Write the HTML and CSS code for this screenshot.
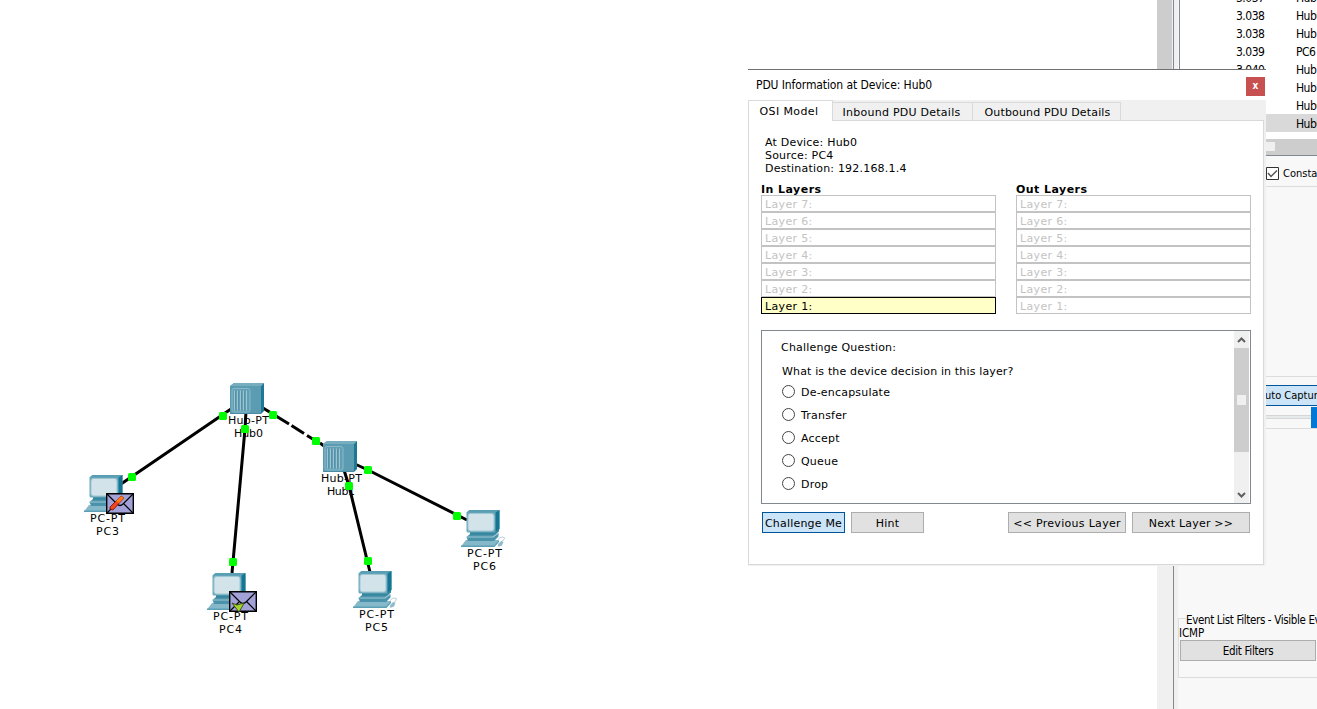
FILE: index.html
```
<!DOCTYPE html>
<html lang="en">
<head>
<meta charset="utf-8">
<title>PDU Information</title>
<link rel="stylesheet" href="styles.css">
</head>
<body>
<div class="app">
  <main class="workspace">
    <svg class="topology" width="1157" height="709" viewBox="0 0 1157 709">
      <defs>
        <symbol id="pc" viewBox="0 0 46 38" overflow="visible">
          <path d="M37 29.500q2-2.500 4.500-2.500 3.500.500 1.500 2.500t-4 3" fill="none" stroke="#b4ced8" stroke-width="1"/>
          <path d="M36.500 36.500l1-3 3-2.500 2 1-1.500 3.500-2.500 1z" fill="#8fbccb"/>
          <path d="M0 36.500L5 30h33l-5 6.500z" fill="#85b8c9"/>
          <path d="M0 35.500h33l5-5.500v2l-4.500 5H0z" fill="#5c9fb5"/>
          <path d="M5.500 27l4-3.500h28v3L33 31H7z" fill="#4a93ab"/>
          <path d="M5.500 27H32l5.500-4" fill="none" stroke="#a0c8d5" stroke-width="1.200"/>
          <path d="M9 21.500h26l3-2v2l-4 3H9z" fill="#33849d"/>
          <path d="M5.500 2.500L8.500 0H38.500v19l-4 3.500H6.500l-1-1z" fill="#6aa8bc"/>
          <path d="M5.500 2.500L8.500 0H38.500L34.500 2.500z" fill="#5a9eb4"/>
          <path d="M34.500 2.500l4-2.500v19l-4 3.500z" fill="#157693"/>
          <rect x="7" y="3.500" width="26" height="17.500" rx="2.500" fill="#d3e3ea" stroke="#9dc5d2"/>
        </symbol>
        <symbol id="hub" viewBox="0 0 34 31">
          <path d="M0 3l4-3h30l-3 3v28H0z" fill="#5b9cb2"/>
          <path d="M0 3l4-3h30l-3 3z" fill="#76adbf"/>
          <path d="M31 3l3-3v28l-3 3z" fill="#1d7894"/>
          <path d="M0 30.500h31" stroke="#478ca4"/>
          <rect x="2" y="5.500" width="18" height="23.500" rx="2" fill="#629fb5" stroke="#8ab9c8"/>
          <path d="M4.500 7.500v20M7.500 7.500v20M10.500 7.500v20M13.500 7.500v20M16.500 7.500v20" stroke="#9cc4d1"/>
          <path d="M5.500 8v19M8.500 8v19M11.500 8v19M14.500 8v19" stroke="#4d8ca4" stroke-width=".7"/>
        </symbol>
        <symbol id="mail" viewBox="0 0 28 21">
          <path d="M.7.700h26.600v19.600H.7z" fill="#a2a2d8" stroke="#000" stroke-width="1.400"/>
          <path d="M1 1l10 10q3 3 6 0L27 1M1 20l9-9M27 20l-9-9" fill="none" stroke="#000" stroke-width="1.200"/>
        </symbol>
      </defs>

      <g class="labels">
        <text x="248.500" y="424" textLength="41">Hub-PT</text><text x="248.500" y="437" textLength="29">Hub0</text>
        <text x="341.500" y="482" textLength="41">Hub-PT</text><text x="341" y="495" textLength="28">Hub1</text>
        <text x="107.500" y="522" textLength="35">PC-PT</text><text x="107.500" y="535" textLength="23">PC3</text>
        <text x="230.500" y="620" textLength="35">PC-PT</text><text x="230.500" y="633" textLength="23">PC4</text>
        <text x="376.500" y="618" textLength="35">PC-PT</text><text x="376.500" y="631" textLength="23">PC5</text>
        <text x="484.500" y="557" textLength="35">PC-PT</text><text x="484.500" y="570" textLength="23">PC6</text>
      </g>
      <g class="cables">
        <path d="M231 409L121 484M246 411L245 429L232 573M344 470L349 486L370 572M356 464.500L368 470L467 520"/>
        <path d="M263 408L289 424M291.500 425.500L304 433.500M307 435.500L316 441M320 443L324 446"/>
      </g>
      <use href="#hub" x="230" y="383" width="34" height="31"/>
      <use href="#hub" x="323" y="441" width="34" height="31"/>
      <use href="#pc" x="84" y="475" width="46" height="38"/>
      <use href="#pc" x="207" y="573" width="46" height="38"/>
      <use href="#pc" x="353" y="571" width="46" height="38"/>
      <use href="#pc" x="461" y="510" width="46" height="38"/>
      <g class="links">
        <rect x="219" y="412" width="8" height="8" rx="1.500"/><rect x="128" y="473" width="8" height="8" rx="1.500"/>
        <rect x="241" y="425" width="8" height="8" rx="1.500"/><rect x="229" y="558" width="8" height="8" rx="1.500"/>
        <rect x="269" y="411" width="8" height="8" rx="1.500"/><rect x="312" y="437" width="8" height="8" rx="1.500"/>
        <rect x="345" y="482" width="8" height="8" rx="1.500"/><rect x="364" y="557" width="8" height="8" rx="1.500"/>
        <rect x="364" y="466" width="8" height="8" rx="1.500"/><rect x="453" y="512" width="8" height="8" rx="1.500"/>
      </g>
      <use href="#mail" x="106" y="493" width="28" height="21"/>
      <path d="M110 507l11-11 3 2-11 12-3-1z" fill="#f0441c" stroke="#701008" stroke-width=".8"/>
      <path d="M116 501l5-5 3 2-5 5z" fill="#ff7a1a"/>
      <use href="#mail" x="229" y="591" width="28" height="21"/>
      <path d="M232 603l5 2 7-2-2 4-3 5-4-5z" fill="#a4d52a" stroke="#34440c" stroke-width=".9"/>
    </svg>
  </main>
  <div class="vscroll"><div class="vscroll-thumb"></div></div>
  <div class="splitter"></div>
  <aside class="panel">
    <div class="event-list">
      <div class="event"><span>3.037</span><span>Hub1</span></div>
      <div class="event"><span>3.038</span><span>Hub0</span></div>
      <div class="event"><span>3.038</span><span>Hub1</span></div>
      <div class="event"><span>3.039</span><span>PC6</span></div>
      <div class="event"><span>3.040</span><span>Hub1</span></div>
      <div class="event"><span></span><span>Hub1</span></div>
      <div class="event"><span></span><span>Hub0</span></div>
      <div class="event selected"><span></span><span>Hub0</span></div>
    </div>
    <div class="hscroll"><i class="hgrip"></i></div>
    <div class="constant">
      <svg width="13" height="13" viewBox="0 0 13 13"><path d="M.5.500h12v12H.5z" fill="#fff" stroke="#333"/><path d="M2 6l3 3.500L11 3.500" fill="none" stroke="#555" stroke-width="1.500"/></svg>
      <span>Constant Delay</span>
    </div>
    <div class="play">
      <div class="capture">uto Capture / Play</div>
      <div class="slider"><div class="groove"></div><div class="handle"></div></div>
    </div>
    <section class="filters">
      <div class="legend">Event List Filters - Visible Events</div>
      <div class="protocol">ICMP</div>
      <div class="edit">Edit Filters</div>
    </section>
  </aside>
</div>

<div class="dialog">
  <header class="titlebar"><span class="title">PDU Information at Device: Hub0</span><span class="close">x</span></header>
  <nav class="tabs">
    <div class="tab active">OSI Model</div><div class="tab inbound">Inbound PDU Details</div><div class="tab outbound">Outbound PDU Details</div><div class="tab-fill"></div>
  </nav>
  <div class="body">
    <div class="info"><div>At Device: Hub0</div><div>Source: PC4</div><div>Destination: 192.168.1.4</div></div>
    <div class="layers">
      <div class="stack">
        <h2>In Layers</h2>
        <div class="layer">Layer 7:</div><div class="layer">Layer 6:</div><div class="layer">Layer 5:</div><div class="layer">Layer 4:</div><div class="layer">Layer 3:</div><div class="layer">Layer 2:</div><div class="layer current">Layer 1:</div>
      </div>
      <div class="stack">
        <h2>Out Layers</h2>
        <div class="layer">Layer 7:</div><div class="layer">Layer 6:</div><div class="layer">Layer 5:</div><div class="layer">Layer 4:</div><div class="layer">Layer 3:</div><div class="layer">Layer 2:</div><div class="layer">Layer 1:</div>
      </div>
    </div>
    <div class="challenge">
      <div class="quiz">
        <div class="heading">Challenge Question:</div>
        <div class="question">What is the device decision in this layer?</div>
        <div class="option"><i></i>De-encapsulate</div>
        <div class="option"><i></i>Transfer</div>
        <div class="option"><i></i>Accept</div>
        <div class="option"><i></i>Queue</div>
        <div class="option"><i></i>Drop</div>
      </div>
      <div class="scroll">
        <svg width="15" height="17" viewBox="0 0 15 17"><path d="M4 11l3.500-3.500L11 11" fill="none" stroke="#606060" stroke-width="2"/></svg>
        <div class="thumb"><i></i></div>
        <svg class="down" width="15" height="17" viewBox="0 0 15 17"><path d="M4 7l3.500 3.500L11 7" fill="none" stroke="#606060" stroke-width="2"/></svg>
      </div>
    </div>
    <div class="actions">
      <div class="btn primary">Challenge Me</div><div class="btn hint">Hint</div><div class="btn prev">&lt;&lt; Previous Layer</div><div class="btn next">Next Layer &gt;&gt;</div>
    </div>
  </div>
</div>
</body>
</html>
```
FILE: styles.css
```
* { box-sizing: border-box; }
body { margin: 0; width: 1317px; height: 709px; overflow: hidden; position: relative; background: #fff; color: #000; font: 11px/13px "DejaVu Sans", sans-serif; white-space: nowrap; }
svg { display: block; flex: none; }

.app { display: flex; width: 1317px; height: 709px; font-family: "DejaVu Sans Condensed", "DejaVu Sans", sans-serif; font-stretch: condensed; }
.workspace { width: 1157px; flex: none; }
.labels text { font: 11px "DejaVu Sans", sans-serif; text-anchor: middle; }
.cables path { fill: none; stroke: #000; stroke-width: 3; }
.links rect { fill: #0f0; }

.vscroll { width: 16px; flex: none; background: #f0f0f0; }
.vscroll-thumb { width: 15px; height: 300px; background: #cdcdcd; }
.splitter { width: 5px; flex: none; background: #f0f0f0; border-left: 1px solid #828790; }
.panel { width: 139px; flex: none; background: #f8f8f8; overflow: hidden; display: flex; flex-direction: column; }
.event-list { height: 139px; flex: none; display: flex; flex-direction: column; justify-content: flex-end; padding-bottom: 7px; margin-left: 1px; border-left: 1px solid #828790; background: #fff; overflow: hidden; }
.event { display: flex; height: 18px; flex: none; line-height: 20px; padding-left: 56px; font-size: 12px; letter-spacing: -0.5px; }
.event span { flex: none; }
.event span:first-child { width: 60px; }
.event.selected { background: #d9d9d9; }
.hscroll { height: 17px; flex: none; padding: 3px 0 0 80px; background: #cdcdcd; border-bottom: 1px solid #828790; background-clip: padding-box; }
.hgrip { display: block; width: 17px; height: 9px; background: #f0f0f0; }
.constant { display: flex; height: 31px; flex: none; padding: 11px 0 0 88px; gap: 4px; line-height: 14px; border-bottom: 1px solid #dcdcdc; }
.play { margin-top: 189px; height: 53px; flex: none; border: solid #dcdcdc; border-width: 1px 0; padding: 8px 0 0 80px; }
.capture { height: 21px; padding-left: 7px; line-height: 20px; background: #cce4f7; border: solid #005499; border-width: 1px 0; }
.slider { display: flex; padding-top: 1px; }
.groove { width: 53px; height: 4px; flex: none; margin-top: 8px; background: #e7eaea; border: solid #d6d6d6; border-width: 1px 0; }
.handle { width: 8px; height: 21px; flex: none; background: #0078d7; }
.filters { margin-top: 189px; height: 60px; flex: none; border: solid #dcdcdc; border-width: 1px 0 1px 1px; }
.legend { width: 160px; height: 12px; margin: -5px 0 0 7px; line-height: 12px; background: #f8f8f8; font-size: 11.5px; letter-spacing: -0.35px; }
.protocol { line-height: 14px; font-size: 11.5px; letter-spacing: -0.1px; }
.edit { width: 136px; height: 21px; margin: 0 0 0 1px; border: 1px solid #adadad; background: #e1e1e1; line-height: 20px; text-align: center; font-size: 11.5px; letter-spacing: -0.3px; }

.dialog { position: absolute; left: 748px; top: 69px; width: 518px; height: 497px; background: #f0f0f0; border-top: 1px solid #707070; display: flex; flex-direction: column; letter-spacing: 0.2px; }
.titlebar { display: flex; justify-content: space-between; height: 30px; flex: none; padding: 7px 1px 0 8px; background: #fff; line-height: 17px; font-family: "DejaVu Sans Condensed", "DejaVu Sans", sans-serif; font-stretch: condensed; }
.title { font-size: 12px; letter-spacing: -0.1px; }
.close { width: 19px; height: 19px; background: #c75050; color: #fff; font-weight: bold; font-size: 10px; text-align: center; line-height: 18px; }
.tabs { display: flex; align-items: flex-end; height: 21px; flex: none; width: 516px; }
.tab { height: 19px; border: 1px solid #d9d9d9; border-left: 0; line-height: 19px; text-align: center; letter-spacing: 0.25px; }
.tab.active { width: 85px; height: 21px; background: #fff; border-left: 1px solid #d9d9d9; border-bottom: 0; line-height: 21px; padding-right: 3px; letter-spacing: 0.4px; }
.tab.inbound { width: 140px; padding-right: 2px; }
.tab.outbound { width: 148px; padding-left: 2px; letter-spacing: 0.15px; }
.tab-fill { flex: 1; border-bottom: 1px solid #d9d9d9; height: 1px; }
.body { width: 516px; height: 444px; flex: none; background: #fff; border: 1px solid #d9d9d9; border-top: 0; padding: 15px 12px 0 12px; display: flex; flex-direction: column; }
.info { padding-left: 4px; height: 39px; }
.layers { display: flex; justify-content: space-between; margin-top: 8px; }
.stack { width: 235px; }
h2 { margin: 0; height: 12px; font-size: 11px; line-height: 13px; font-weight: bold; letter-spacing: 0.45px; }
.layer { height: 17px; border: 1px solid #c3c3c3; color: #c3c3c3; line-height: 17px; padding-left: 3px; letter-spacing: 0.35px; }
.layer.current { background: #ffffc8; border-color: #000; color: #000; }
.challenge { display: flex; justify-content: space-between; width: 490px; height: 174px; margin-top: 16px; border: 1px solid #828790; padding-right: 1px; }
.quiz { padding: 9px 0 0 19px; }
.heading { height: 24px; }
.question { height: 17px; }
.heading, .question { line-height: 15px; }
.question { padding-left: 1px; letter-spacing: 0.15px; }
.option { display: flex; align-items: center; gap: 6px; height: 23px; line-height: 13px; padding: 0 0 1px 1px; }
.option i { width: 13px; height: 13px; border: 1px solid #444; border-radius: 50%; margin-top: -1px; }
.scroll { width: 15px; display: flex; flex-direction: column; background: #f0f0f0; }
.thumb { height: 104px; background: #cdcdcd; padding: 47px 3px 0; }
.thumb i { display: block; width: 9px; height: 10px; background: #f0f0f0; }
.down { margin-top: auto; }
.actions { display: flex; margin-top: 8px; padding-left: 1px; }
.btn { height: 21px; border: 1px solid #adadad; background: #e1e1e1; line-height: 21px; text-align: center; }
.btn.primary { width: 83px; border-color: #005499; background: #cce4f7; }
.btn.hint { width: 73px; margin-left: 6px; }
.btn.prev { width: 118px; margin-left: 84px; letter-spacing: 0.3px; }
.btn.next { width: 118px; margin-left: 6px; }
```
